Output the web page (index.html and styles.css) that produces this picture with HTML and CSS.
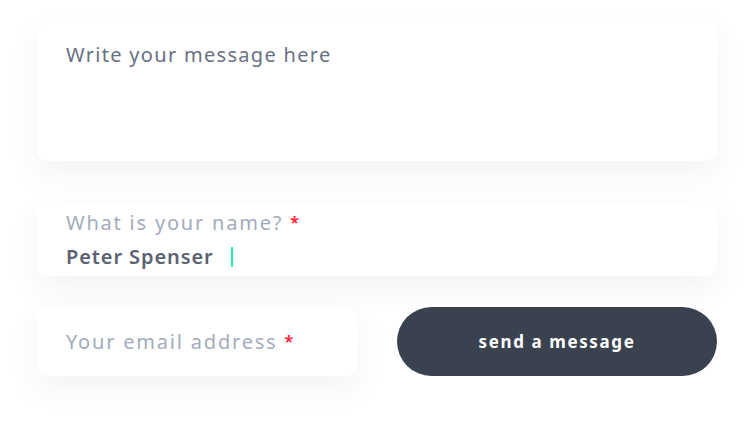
FILE: index.html
```html
<!DOCTYPE html>
<html>
<head>
<meta charset="utf-8">
<link rel="stylesheet" href="styles.css">
</head>
<body>
<form class="form">
  <div class="card message">
    <span class="placeholder-dark">Write your message here</span>
  </div>
  <div class="card name">
    <span class="label">What is your name? <span class="req">*</span></span>
    <span class="value">Peter Spenser<span class="caret"></span></span>
  </div>
  <div class="row">
    <div class="card email">
      <span class="label">Your email address <span class="req">*</span></span>
    </div>
    <button type="button" class="send">send a message</button>
  </div>
</form>
</body>
</html>
```

FILE: styles.css
```css
html, body {
  margin: 0;
  padding: 0;
  background: #ffffff;
}
body {
  font-family: "Noto Sans", "Open Sans", sans-serif;
}
.form {
  width: 680px;
  padding: 22px 0 50px 37px;
  display: flex;
  flex-direction: column;
}
.card {
  background: #ffffff;
  border-radius: 10px;
  box-shadow: 0 12px 32px rgba(40, 50, 70, 0.06);
  box-sizing: border-box;
  padding-left: 29px;
}
.message {
  height: 139px;
  padding-top: 19px;
}
.placeholder-dark {
  font-size: 20px;
  letter-spacing: 1.3px;
  color: #687183;
  line-height: 28px;
}
.name {
  margin-top: 41px;
  height: 74px;
  padding-top: 6px;
  display: flex;
  flex-direction: column;
}
.label {
  font-size: 20px;
  letter-spacing: 1.8px;
  color: #a2acbd;
  line-height: 28px;
}
.req {
  color: #ff2a3a;
  letter-spacing: 0;
  font-size: 16px;
  font-weight: 700;
  vertical-align: 2px;
}
.value {
  margin-top: 6px;
  font-size: 20px;
  font-weight: 600;
  letter-spacing: 0.9px;
  color: #5b6272;
  line-height: 28px;
  display: flex;
  align-items: center;
}
.caret {
  display: inline-block;
  width: 2px;
  height: 20px;
  background: #22f0aa;
  margin-left: 17px;
}
.row {
  margin-top: 31px;
  display: flex;
  gap: 40px;
}
.email {
  width: 320px;
  height: 69px;
  display: flex;
  align-items: center;
}
.send {
  width: 320px;
  height: 69px;
  border: none;
  border-radius: 35px;
  background: #3a424f;
  color: #ffffff;
  font-family: "Noto Sans", "Open Sans", sans-serif;
  font-size: 17px;
  font-weight: 700;
  letter-spacing: 1.6px;
  cursor: pointer;
}
```
